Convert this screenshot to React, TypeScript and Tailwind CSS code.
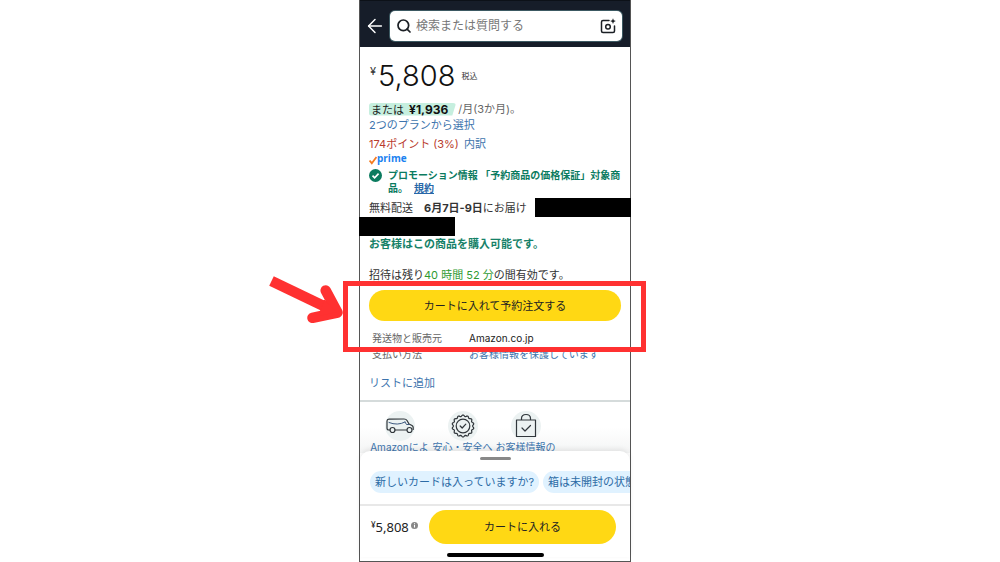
import { ArrowLeft, Search } from "lucide-react";

const trustItems = [
  { label: "Amazonによ", icon: "van" },
  { label: "安心・安全へ", icon: "badge" },
  { label: "お客様情報の", icon: "bag" },
];

const suggestions = ["新しいカードは入っていますか?", "箱は未開封の状態"];

const CameraIcon = () => (
  <svg viewBox="0 0 16 16" className="h-4 w-4" fill="none" stroke="#1b1f24" strokeWidth="1.5" strokeLinecap="round">
    <path d="M9 2.5H3Q1.5 2.5 1.5 4v9Q1.5 14.5 3 14.5h10q1.5 0 1.5-1.5V8" />
    <circle cx="8" cy="8.7" r="2.3" />
    <path d="M13 .3l.8 2 2 .8-2 .8-.8 2-.8-2-2-.8 2-.8z" fill="#1b1f24" stroke="none" />
  </svg>
);

const CheckBadge = () => (
  <svg viewBox="0 0 13 13" className="h-[13px] w-[13px] shrink-0">
    <circle cx="6.5" cy="6.5" r="6.5" fill="#0b7b5f" />
    <path d="M3.5 6.7l2.1 2.1 4-4.2" fill="none" stroke="#fff" strokeWidth="1.7" />
  </svg>
);

// Scalloped outline of the guarantee seal
const sealPath = (() => {
  const points: string[] = [];
  for (let i = 0; i <= 120; i++) {
    const a = (i / 120) * Math.PI * 2;
    const r = 10.3 + 0.7 * Math.cos(a * 14);
    points.push(`${(15 + r * Math.sin(a)).toFixed(2)} ${(15 - r * Math.cos(a)).toFixed(2)}`);
  }
  return `M${points.join("L")}Z`;
})();

const TrustIcon = ({ name }: { name: string }) => (
  <svg viewBox="0 0 30 30" className="h-[30px] w-[30px] overflow-visible" fill="none" stroke="#30363b" strokeWidth="1.2" strokeLinecap="round" strokeLinejoin="round">
    <circle cx="15" cy="15" r="15" fill="#ecf2f2" stroke="none" />
    {name === "van" && (
      <>
        <path d="M5 19H3.8Q2 19 2 17.3V10Q2 8.3 4 8.2L19 8q2.2 0 3.2 1.8l1.8 3.2 3 1.5q1.2.7 1.2 2v2M10 19h11.5" />
        <circle cx="7.5" cy="19" r="2.5" />
        <circle cx="24.5" cy="19" r="2.5" />
        <path d="M4 11.5q8.5 3.5 16-.5M20 11l1.500 2.500H24" stroke="#3e5a80" strokeWidth="1" />
      </>
    )}
    {name === "badge" && (
      <>
        <path d={sealPath} />
        <circle cx="15" cy="15" r="6.8" />
        <path d="M12.2 15l2 2 3.6-3.8" />
      </>
    )}
    {name === "bag" && (
      <>
        <path d="M5.5 9h19v16.5h-19zM10.5 9V7.5q0-4 4.5-4t4.5 4V9" />
        <path d="M11 17l3 3 5.5-5.5" />
      </>
    )}
  </svg>
);

const PointerArrow = () => (
  <svg viewBox="0 0 80 50" className="absolute top-[273px] -left-[91px] h-[50px] w-20" fill="none" stroke="#ff3131">
    <path d="M2.5 8L64 37.5" strokeWidth="10.5" />
    <path d="M56.7 17.5L68.5 39.5L43.5 44.8" strokeWidth="10.5" strokeLinecap="round" strokeLinejoin="round" />
    <path d="M55 27L68 39L50 43z" fill="#ff3131" />
  </svg>
);

const Header = () => (
  <header className="flex h-[47px] items-center gap-1 border-t border-[#0c1118] bg-[#161d29] pt-1 pr-2 pl-1">
    <button type="button" aria-label="戻る" className="text-white">
      <ArrowLeft size={22} strokeWidth={1.6} />
    </button>
    <label className="flex h-[30px] min-w-0 flex-1 items-center gap-1 rounded-[5px] bg-white px-1.5 ring-1 ring-[#3c5962]">
      <Search size={16} strokeWidth={2.6} className="shrink-0 text-[#1b1f24]" />
      <input
        type="text"
        aria-label="検索"
        placeholder="検索または質問する"
        className="min-w-0 flex-1 text-[12px] outline-none placeholder:text-[#777]"
      />
      <CameraIcon />
    </label>
  </header>
);

const ProductDetails = () => (
  <main className="pt-[11px] text-[11px] leading-4 text-[#333]">
    <div className="px-[9px]">
      <div className="flex h-9 items-center">
        <span className="self-start pt-[5px] pl-px">¥</span>
        <span className="pl-0.5 text-[29px] font-light text-[#111]">5,808</span>
        <span className="pl-1.5 text-[8px]">税込</span>
      </div>
      <p className="mt-[7px] flex h-4 items-center gap-0.5 text-[#666]">
        <span className="h-[13px] rounded-[3px] bg-[#c6efdf] pr-2 pl-0.5 leading-[13px] text-[#222] [clip-path:polygon(0_0,100%_0,calc(100%-4px)_100%,0_100%)]">
          または <b className="pl-0.5 text-[12px] text-[#111]">¥1,936</b>
        </span>
        <span>/月(3か月)。</span>
      </p>
      <a href="#plans" className="block text-[#3d74ad]">2つのプランから選択</a>
      <p className="mt-1 leading-[15px] text-[#b93a2c]">
        174ポイント (3%) <a href="#points" className="pl-0.5 text-[#3d74ad]">内訳</a>
      </p>
      <div className="flex h-3 items-center font-['Open_Sans'] text-[10px] font-bold text-[#1a82f0]">
        <svg viewBox="0 0 8 9" className="mt-1 h-[9px] w-2" fill="none" stroke="#f47b20" strokeWidth="1.8">
          <path d="M.5 4.5l2.3 2.7L7.5 1" />
        </svg>
        prime
      </div>
      <div className="mt-[5px] -mr-1 flex gap-1.5 text-[10px] leading-[13px] font-bold text-[#0b7b5f]">
        <CheckBadge />
        <p>
          プロモーション情報 「予約商品の価格保証」対象商品。
          <a href="#terms" className="ml-1.5 inline-block text-[#2867a8] underline">規約</a>
        </p>
      </div>
    </div>
    <div className="mt-[3px] flex h-[19px] items-center justify-between pl-[9px]">
      <p className="whitespace-nowrap">
        無料配送　<b>6月7日-9日</b>にお届け
      </p>
      <span className="-mr-px h-full w-24 bg-black" />
    </div>
    <div className="-ml-px h-[19px] w-24 bg-black" />
    <div className="px-[9px]">
      <p className="font-bold text-[#168168]">お客様はこの商品を購入可能です。</p>
      <p className="mt-[15px]">
        招待は残り<span className="text-[#2f9a32]">40 時間 52 分</span>の間有効です。
      </p>
      <button type="button" className="mt-[7px] block h-[31px] w-full rounded-full bg-[#ffd814] text-[#222]">
        カートに入れて予約注文する
      </button>
      <dl className="mt-[9px] grid grid-cols-[97px_1fr] pl-[3px] text-[10px] text-[#666]">
        <dt>発送物と販売元</dt>
        <dd className="text-[#222]">Amazon.co.jp</dd>
        <dt>支払い方法</dt>
        <dd><a href="#secure" className="text-[#3d74ad]">お客様情報を保護しています</a></dd>
      </dl>
      <a href="#list" className="mt-[13px] block text-[#3d74ad]">リストに追加</a>
    </div>
    <ul className="mt-[9px] flex border-t-2 border-[#d5dbdb] bg-linear-to-b from-white from-50% to-[#f4f5f5] px-2 pt-[9px]">
      {trustItems.map((item) => (
        <li key={item.label} className="flex w-[63px] flex-col items-center text-[10px] leading-3 whitespace-nowrap text-[#3d74ad]">
          <TrustIcon name={item.icon} />
          {item.label}
        </li>
      ))}
    </ul>
  </main>
);

const BottomSheet = () => (
  <footer className="relative -mt-0.5 rounded-t-[10px] bg-white pt-1.5 text-[#222] shadow-[0_-2px_5px_rgba(0,0,0,0.08)]">
    <div className="mx-auto h-[3px] w-[31px] rounded-full bg-[#888]" />
    <div className="mt-[11px] flex gap-1 overflow-hidden pl-2.5">
      {suggestions.map((text) => (
        <button key={text} type="button" className="h-[22px] shrink-0 rounded-full bg-[#e0f2ff] px-[5px] text-[11px] text-[#2d6ca6]">
          {text}
        </button>
      ))}
    </div>
    <div className="mt-[11px] flex items-center border-t-2 border-[#e8e8e8] pt-1 pr-3.5 pl-[11px]">
      <p className="flex items-start font-['Noto_Sans'] text-[13px] leading-4">
        <span className="text-[8px] leading-3">¥</span>5,808
      </p>
      <svg viewBox="0 0 8 8" className="mb-1 ml-0.5 h-[7px] w-[7px]">
        <circle cx="4" cy="4" r="4" fill="#888" />
        <path d="M4 1.5v1M4 3.3v3" stroke="#fff" strokeWidth="1.2" />
      </svg>
      <button type="button" className="ml-auto h-[34px] w-[187px] rounded-full bg-[#ffd814] text-[11px]">
        カートに入れる
      </button>
    </div>
    <div className="mx-auto mt-[9px] mb-1 h-1 w-[97px] rounded-full bg-black" />
  </footer>
);

const App = () => {
  return (
    <div className="flex min-h-screen justify-center bg-white pr-2.5 font-['Inter','Noto_Sans_CJK_JP',sans-serif]">
      <div className="relative w-[272px] self-start border-x border-b border-[#555]">
        <Header />
        <ProductDetails />
        <BottomSheet />
        <div className="pointer-events-none absolute top-[281px] -right-4 -left-[17px] h-[71px] border-[5px] border-[#ff3131]" />
        <PointerArrow />
      </div>
    </div>
  );
};

export default App;
